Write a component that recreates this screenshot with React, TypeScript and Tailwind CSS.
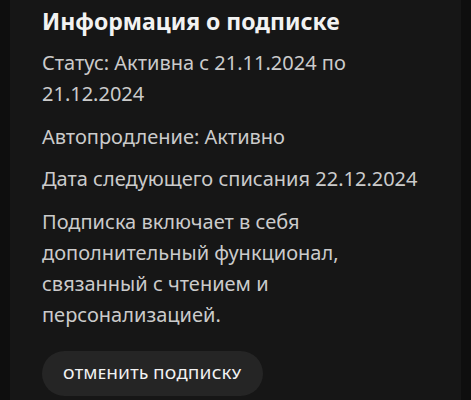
import React from "react";

export default function App() {
  return (
    <div className="min-h-[400px] w-[471px] bg-[#0e0e0e] px-[10px]" style={{ fontFamily: '"Noto Sans", "Open Sans", sans-serif' }}>
      <div className="min-h-[410px] bg-[#161616] pl-[32px] pr-[20px] pt-[6px]">
        <h1 className="text-[23px] font-bold leading-[31px] text-[#f2f2f2]">Информация о подписке</h1>
        <div className="mt-[10px] flex flex-col gap-[11.5px] text-[20px] leading-[31px] text-[#cbcbcb]">
          <p className="w-[330px]">Статус: Активна с 21.11.2024 по 21.12.2024</p>
          <p>Автопродление: Активно</p>
          <p>Дата следующего списания 22.12.2024</p>
          <p className="w-[330px]">Подписка включает в себя дополнительный функционал, связанный с чтением и персонализацией.</p>
        </div>
        <button className="mt-[21px] h-[45px] rounded-full bg-[#252525] px-[21px] text-[15px] font-medium tracking-[0.03em] text-[#f2f2f2]">
          ОТМЕНИТЬ ПОДПИСКУ
        </button>
      </div>
    </div>
  );
}
